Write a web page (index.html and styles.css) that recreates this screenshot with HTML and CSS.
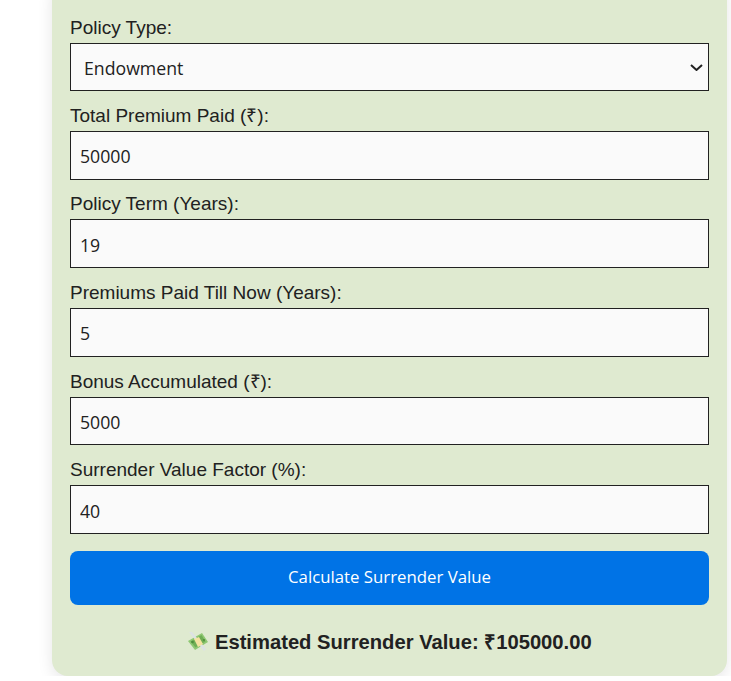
FILE: index.html
```html
<!DOCTYPE html>
<html lang="en">
<head>
    <meta charset="UTF-8">
    <meta name="viewport" content="width=device-width, initial-scale=1.0">
    <title>Surrender Value Calculator</title>
    <link rel="stylesheet" href="styles.css">
</head>
<body>
    <div class="container">
        <label for="policyType">Policy Type:</label>
        <div class="select-wrap">
            <select id="policyType">
                <option>Endowment</option>
                <option>Whole Life</option>
            </select>
            <svg class="select-arrow" viewBox="0 0 13 7" width="13" height="7">
                <path d="M1 1 L6.5 6 L12 1" fill="none" stroke="#212121" stroke-width="2"/>
            </svg>
        </div>

        <label for="premium">Total Premium Paid (₹):</label>
        <input type="number" id="premium" value="50000">

        <label for="term">Policy Term (Years):</label>
        <input type="number" id="term" value="19">

        <label for="paid">Premiums Paid Till Now (Years):</label>
        <input type="number" id="paid" value="5">

        <label for="bonus">Bonus Accumulated (₹):</label>
        <input type="number" id="bonus" value="5000">

        <label for="factor">Surrender Value Factor (%):</label>
        <input type="number" id="factor" value="40">

        <button class="btn-blue">Calculate Surrender Value</button>

        <div class="result">
            <!-- flying money icon -->
            <svg class="money-icon" viewBox="0 0 22 20" width="22" height="20">
                <path d="M1 9 L15 1 L21 10 L8 18 Z" fill="#8fc873"/>
                <path d="M3.5 9.5 L14.5 3 L18.5 9.5 L8.5 15.5 Z" fill="#6fae55"/>
                <path d="M2 0 L5 0 L19 17 L17 19 Z" fill="#dde2e4"/>
                <path d="M7 7 L12 5 L16 12 L11 15 Z" fill="#f4e2a0"/>
                <circle cx="5.5" cy="10" r="1.3" fill="#4e8f3c"/>
                <circle cx="17" cy="8" r="1.1" fill="#4e8f3c"/>
            </svg>
            Estimated Surrender Value: ₹105000.00
        </div>
    </div>
</body>
</html>
```

FILE: styles.css
```css
body {
    margin: 0;
    font-family: "Liberation Sans", Arial, sans-serif;
    background-color: white;
    color: #212121;
    overflow: hidden;
}

.container {
    width: 639px;
    margin: -20px 0 0 52px;
    padding: 36px 18px 22px;
    background-color: #dfead0;
    border-radius: 16px;
    box-shadow: 0 4px 15px rgba(0, 0, 0, 0.1);
}

label {
    display: block;
    padding-top: 1px;
    font-size: 19px;
    line-height: 22px;
    margin-bottom: 4px;
}

select, input {
    display: block;
    width: 100%;
    box-sizing: border-box;
    padding: 10px 9px 8px;
    margin-bottom: 12.8px;
    border: 1px solid #212121;
    border-radius: 0;
    background-color: #fafafa;
    color: #212121;
    font-family: "Open Sans", sans-serif;
    font-size: 17.7px;
}

.select-wrap {
    position: relative;
}

select {
    height: 48px;
    padding-left: 13px;
    appearance: none;
}

.select-arrow {
    position: absolute;
    right: 6px;
    top: 21px;
    pointer-events: none;
}

input {
    height: 48.8px;
}

input[type="number"] {
    appearance: textfield;
}

button {
    display: block;
    width: 100%;
    height: 54px;
    margin-top: 17px;
    padding-bottom: 4px;
    border: none;
    border-radius: 8px;
    font-family: "Open Sans", sans-serif;
    font-size: 16.8px;
    cursor: pointer;
}

.btn-blue {
    background-color: #0073e6;
    color: white;
}

.result {
    margin-top: 26px;
    font-size: 20.2px;
    font-weight: bold;
    line-height: 23px;
    text-align: center;
}

.money-icon {
    vertical-align: -3px;
}
```
